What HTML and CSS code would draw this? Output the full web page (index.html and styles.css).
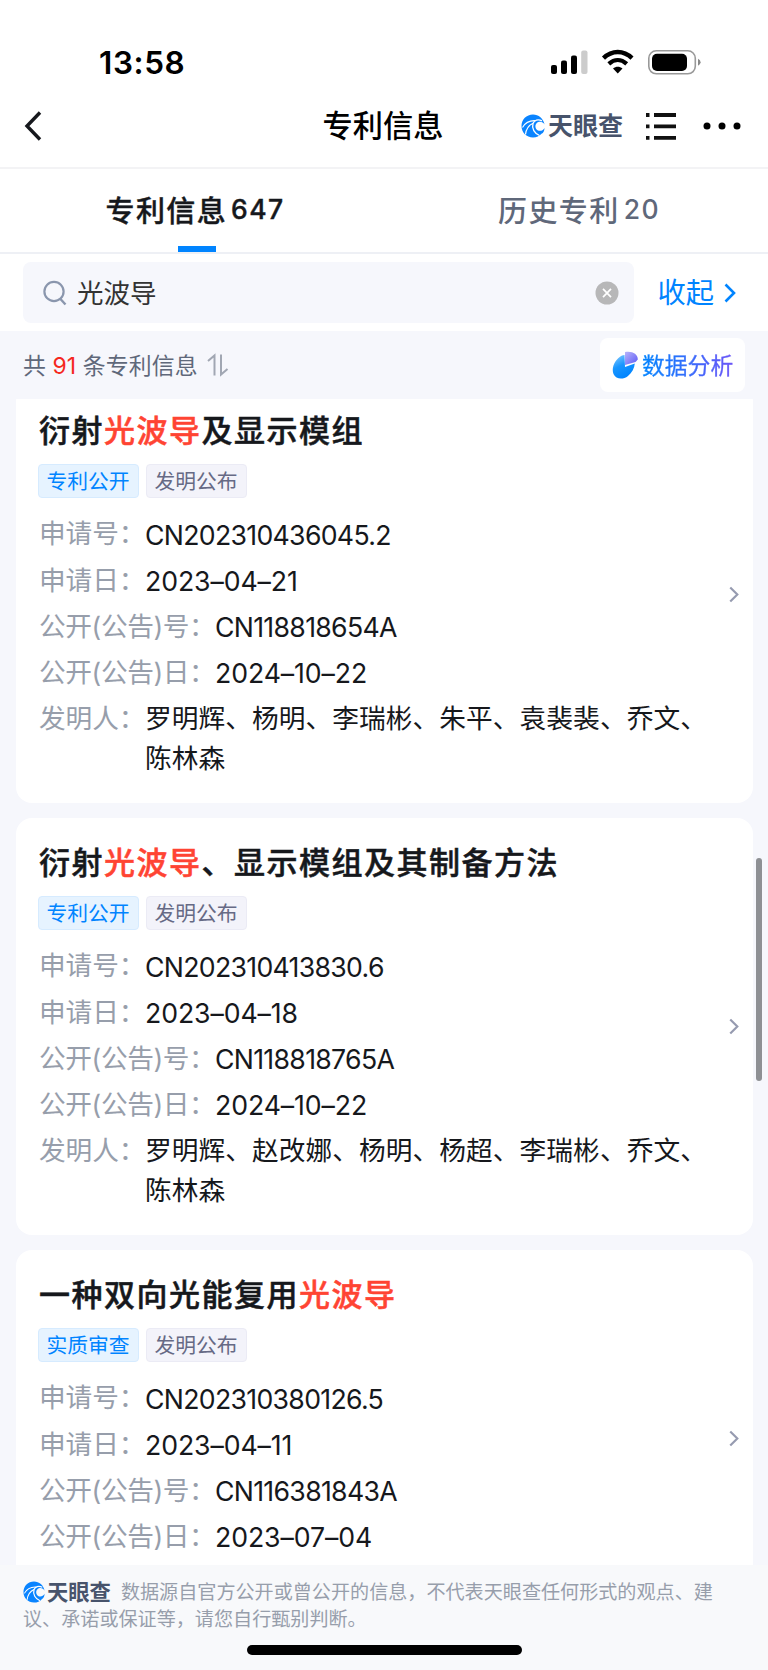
FILE: index.html
```html
<!DOCTYPE html>
<html lang="zh-CN">
<head>
    <meta charset="UTF-8">
    <meta name="viewport" content="width=device-width, initial-scale=1.0">
    <title>专利信息</title>
    <link rel="stylesheet" href="styles.css">
</head>
<body>
    <!-- Shared icons -->
    <svg class="sprite" aria-hidden="true">
        <symbol id="icon-brand" viewBox="0 0 24 24">
            <path d="M23.5 10.5 C22.5 4.5 17.500 0.500 12 0.500 C5.500 0.500 0.500 5.500 0.500 12 C0.500 18.500 5.500 23.500 12 23.500 C15.500 23.500 18.500 22 20.500 19.800 C22.500 19 23.500 16.500 23.500 14 C21.800 17.300 17.500 17.800 15.400 15.200 C13.500 12.500 14.500 9.300 17.300 8 C19.800 7.200 22.300 8.200 23.500 10.500 Z" fill="#0a84ff"/>
            <path d="M21 6.800 C17 4.800 13.200 6 12 9.500 C10.500 14.500 13.500 19.500 18.500 21.500" fill="none" stroke="#fff" stroke-width="1.300"/>
            <path d="M1.500 13.500 C4 9 8 6.300 14.500 6.700" fill="none" stroke="#fff" stroke-width="1.100"/>
            <path d="M4.500 20.500 C5 15.500 7.500 11.500 12 9.300" fill="none" stroke="#fff" stroke-width="1.200"/>
        </symbol>
        <symbol id="icon-arrow" viewBox="0 0 12 20">
            <path d="M1.5 1.5 L10 10 L1.5 18.5" fill="none" stroke="currentColor"/>
        </symbol>
    </svg>

    <!-- Status Bar -->
    <div class="status-bar">
        <span class="clock">13:58</span>
        <svg class="status-icons" width="152" height="28" viewBox="0 0 152 28">
            <rect x="1" y="17" width="6" height="9" rx="2"/>
            <rect x="11" y="12.5" width="6" height="13.5" rx="2"/>
            <rect x="21" y="7.5" width="6" height="18.5" rx="2"/>
            <rect x="31.2" y="2.5" width="6.3" height="23.5" rx="2" fill="#ccc"/>
            <path d="M53.5 10.2 C62 2 73.5 2 82 10.2" fill="none" stroke="#000" stroke-width="4.4"/>
            <path d="M58.8 15.9 C64.5 10.7 71 10.7 76.7 15.9" fill="none" stroke="#000" stroke-width="4.2"/>
            <path d="M63 20.6 C66 18 69.5 18 72.5 20.6 L67.75 25.6 Z"/>
            <rect x="98.8" y="2.8" width="46.5" height="23" rx="7.5" fill="none" stroke="#999" stroke-width="1.6"/>
            <rect x="102" y="5.7" width="35" height="17.3" rx="5"/>
            <path d="M148 10.8 Q150.6 12 150.6 14.3 Q150.6 16.6 148 17.8 Z" fill="#888"/>
        </svg>
    </div>

    <!-- Header -->
    <header class="navbar">
        <svg class="back-icon" width="18" height="30" viewBox="0 0 18 30">
            <path d="M16 1.5 L3 15 L16 28.5" fill="none" stroke="#16181d" stroke-width="3.4"/>
        </svg>
        <h1 class="nav-title">专利信息</h1>
        <div class="nav-actions">
            <span class="brand"><svg class="brand-icon"><use href="#icon-brand"/></svg>天眼查</span>
            <svg class="list-icon" width="32" height="28" viewBox="0 0 32 28">
                <path d="M1 3 H4.5 M9 3 H31 M1 14.3 H4.5 M9 14.3 H31 M1 25.8 H4.5 M9 25.8 H31" stroke="#111" stroke-width="3.8"/>
            </svg>
            <svg width="38" height="8" viewBox="0 0 38 8">
                <circle cx="4" cy="4" r="3.5"/>
                <circle cx="19" cy="4" r="3.5"/>
                <circle cx="34" cy="4" r="3.5"/>
            </svg>
        </div>
    </header>

    <!-- Tabs -->
    <nav class="tabs">
        <a class="tab active">专利信息<span class="tab-count">647</span></a>
        <a class="tab">历史专利<span class="tab-count">20</span></a>
    </nav>

    <!-- Search -->
    <div class="search-row">
        <div class="search-box">
            <svg width="24" height="26" viewBox="0 0 24 26">
                <circle cx="11" cy="11.5" r="9.6" fill="none" stroke="#8a96ad" stroke-width="2.2"/>
                <path d="M17 18.5 L22.5 24.5" stroke="#8a96ad" stroke-width="2.4"/>
            </svg>
            <span class="search-text">光波导</span>
            <svg class="clear-icon" width="24" height="24" viewBox="0 0 24 24">
                <circle cx="12" cy="12" r="11.5" fill="#b7b7b8"/>
                <path d="M8 7.8 L16 16.2 M16 7.8 L8 16.2" stroke="#fff" stroke-width="1.7"/>
            </svg>
        </div>
        <a class="collapse"><span>收起</span><svg class="collapse-arrow"><use href="#icon-arrow"/></svg></a>
    </div>

    <!-- Summary -->
    <div class="summary">
        <p class="total">共 <em>91</em> 条专利信息</p>
        <svg class="sort-icon" width="22" height="24" viewBox="0 0 22 24">
            <path d="M1 8 L7.5 2.5 V22.5 M14 1.5 V21.5 L20.5 16" fill="none" stroke="#a1a7b3" stroke-width="2"/>
        </svg>
        <button class="analysis-btn">
            <svg width="26" height="28" viewBox="0 0 26 28">
                <defs>
                    <linearGradient id="pie-blue" x1="0" y1="0" x2="0.5" y2="1">
                        <stop offset="0" stop-color="#8fd0ff"/>
                        <stop offset="0.5" stop-color="#1896ff"/>
                        <stop offset="1" stop-color="#0084ff"/>
                    </linearGradient>
                    <linearGradient id="pie-purple" x1="0" y1="0" x2="1" y2="1">
                        <stop offset="0" stop-color="#b9b5fb"/>
                        <stop offset="1" stop-color="#5b57f5"/>
                    </linearGradient>
                </defs>
                <path d="M10 4.5 C3 8 -1 17 1.5 23 C4 28.5 11 29 16 25 C20 21.5 22.5 17 22.8 12.5 L13 16 L12.5 4 Z" fill="url(#pie-blue)"/>
                <path d="M13 1 C20 -0.5 26 3 25.8 8.5 L23.5 11 L13 14 Z" fill="url(#pie-purple)"/>
            </svg>
            <span>数据分析</span>
        </button>
    </div>

    <!-- Patent List -->
    <main class="patent-list">
        <article class="card">
            <div class="card-body">
                <h2 class="card-title">衍射<em>光波导</em>及显示模组</h2>
                <div class="tags"><span class="tag tag-blue">专利公开</span><span class="tag">发明公布</span></div>
                <dl class="fields">
                    <div class="field"><dt>申请号：</dt><dd>CN202310436045.2</dd></div>
                    <div class="field"><dt>申请日：</dt><dd class="date">2023–04–21</dd></div>
                    <div class="field wide"><dt>公开(公告)号：</dt><dd>CN118818654A</dd></div>
                    <div class="field wide"><dt>公开(公告)日：</dt><dd class="date">2024–10–22</dd></div>
                    <div class="field people"><dt>发明人：</dt><dd>罗明辉、杨明、李瑞彬、朱平、袁裴裴、乔文、陈林森</dd></div>
                </dl>
            </div>
            <svg class="card-arrow"><use href="#icon-arrow"/></svg>
        </article>

        <article class="card">
            <div class="card-body">
                <h2 class="card-title">衍射<em>光波导</em>、显示模组及其制备方法</h2>
                <div class="tags"><span class="tag tag-blue">专利公开</span><span class="tag">发明公布</span></div>
                <dl class="fields">
                    <div class="field"><dt>申请号：</dt><dd>CN202310413830.6</dd></div>
                    <div class="field"><dt>申请日：</dt><dd class="date">2023–04–18</dd></div>
                    <div class="field wide"><dt>公开(公告)号：</dt><dd>CN118818765A</dd></div>
                    <div class="field wide"><dt>公开(公告)日：</dt><dd class="date">2024–10–22</dd></div>
                    <div class="field people"><dt>发明人：</dt><dd>罗明辉、赵改娜、杨明、杨超、李瑞彬、乔文、陈林森</dd></div>
                </dl>
            </div>
            <svg class="card-arrow"><use href="#icon-arrow"/></svg>
        </article>

        <article class="card card-short">
            <div class="card-body">
                <h2 class="card-title">一种双向光能复用<em>光波导</em></h2>
                <div class="tags"><span class="tag tag-blue">实质审查</span><span class="tag">发明公布</span></div>
                <dl class="fields">
                    <div class="field"><dt>申请号：</dt><dd>CN202310380126.5</dd></div>
                    <div class="field"><dt>申请日：</dt><dd class="date">2023–04–11</dd></div>
                    <div class="field wide"><dt>公开(公告)号：</dt><dd>CN116381843A</dd></div>
                    <div class="field wide"><dt>公开(公告)日：</dt><dd class="date">2023–07–04</dd></div>
                </dl>
            </div>
            <svg class="card-arrow"><use href="#icon-arrow"/></svg>
        </article>
    </main>
    <div class="scrollbar"></div>

    <!-- Footer -->
    <footer class="footer">
        <p class="disclaimer"><span class="brand brand-small"><svg class="brand-icon"><use href="#icon-brand"/></svg>天眼查</span>数据源自官方公开或曾公开的信息，不代表天眼查任何形式的观点、建议、承诺或保证等，请您自行甄别判断。</p>
        <div class="home-indicator"></div>
    </footer>
</body>
</html>
```

FILE: styles.css
```css
/* Global Styles */
:root {
    --primary-color: #0084ff;
    --highlight-color: #ff4433;
    --background-color: #f6f7fc;
    --text-color: #16181c;
    --label-color: #979eab;
    --muted-color: #5f687a;
}

* {
    box-sizing: border-box;
}

body {
    position: relative;
    width: 768px;
    height: 1670px;
    margin: 0;
    overflow: hidden;
    display: flex;
    flex-direction: column;
    background-color: #fff;
    color: var(--text-color);
    font-family: Inter, "Noto Sans CJK SC", sans-serif;
}

h1, h2, p, dl, dd {
    margin: 0;
}

em {
    font-style: normal;
}

svg {
    flex: none;
}

.sprite {
    position: absolute;
    width: 0;
    height: 0;
}

/* Status Bar */
.status-bar {
    height: 84px;
    padding: 42px 66px 0 99px;
    display: flex;
    justify-content: space-between;
    align-items: center;
}

.clock {
    margin-top: -2px;
    font-size: 31.5px;
    font-weight: 600;
    letter-spacing: 0.6px;
    color: #000;
}

.status-icons {
    margin-top: -2px;
}

/* Header */
.navbar {
    height: 85px;
    padding: 0 27px 0 24px;
    display: grid;
    grid-template-columns: 1fr auto 1fr;
    align-items: center;
    border-bottom: 2px solid #f3f3f5;
}

.nav-title {
    padding-left: 1px;
    font-size: 30.2px;
    font-weight: 500;
    line-height: 40px;
    color: #000;
}

.nav-actions {
    display: flex;
    justify-content: flex-end;
    align-items: center;
}

.brand {
    display: flex;
    align-items: center;
    gap: 3px;
    font-size: 25px;
    font-weight: 700;
    line-height: 28px;
    color: #47536b;
}

.brand-icon {
    width: 24px;
    height: 24px;
}

.list-icon {
    margin: 0 26px 0 22px;
}

/* Tabs */
.tabs {
    height: 85px;
    display: grid;
    grid-template-columns: 1fr 1fr;
    border-bottom: 2px solid #eef0f5;
}

.tab {
    position: relative;
    display: flex;
    justify-content: center;
    align-items: center;
    padding: 0 0 4px 6px;
    font-size: 29px;
    font-weight: 500;
    letter-spacing: 1.4px;
    color: var(--muted-color);
}

.tab.active {
    color: var(--text-color);
    -webkit-text-stroke: 0.4px;
}

.tab.active::after {
    content: "";
    position: absolute;
    left: 178px;
    bottom: 0;
    width: 38px;
    height: 6px;
    background-color: var(--primary-color);
}

.tab-count {
    margin-left: 4px;
    font-size: 26.5px;
}

/* Search */
.search-row {
    height: 77px;
    padding: 8px 32px 8px 23px;
    display: flex;
    justify-content: space-between;
    align-items: center;
}

.search-box {
    width: 611px;
    height: 61px;
    padding: 0 15px 0 20px;
    display: flex;
    align-items: center;
    border-radius: 8px;
    background-color: var(--background-color);
}

.search-text {
    margin-left: 10px;
    padding-bottom: 2px;
    font-size: 26.5px;
    color: #333;
}

.clear-icon {
    margin-left: auto;
}

.collapse {
    display: flex;
    align-items: center;
    gap: 10px;
    font-size: 28.3px;
    color: var(--primary-color);
}

.collapse span {
    padding-bottom: 4px;
}

.collapse-arrow {
    width: 12px;
    height: 20px;
    stroke-width: 2.6;
}

/* Summary */
.summary {
    height: 68px;
    padding: 0 23px;
    display: flex;
    align-items: center;
    background-color: var(--background-color);
}

.total {
    padding-bottom: 2px;
    font-size: 22.9px;
    letter-spacing: 0.1px;
    color: var(--muted-color);
}

.total em {
    color: #f5281e;
}

.sort-icon {
    margin-left: 9px;
}

.analysis-btn {
    width: 145px;
    height: 54px;
    margin-left: auto;
    padding: 0 0 0 12px;
    display: flex;
    align-items: center;
    gap: 4px;
    border: none;
    border-radius: 8px;
    background-color: #fff;
    font-family: inherit;
    font-size: 22.8px;
}

.analysis-btn span {
    padding-bottom: 2px;
    background: linear-gradient(90deg, #0084ff, #6b55f8);
    background-clip: text;
    -webkit-background-clip: text;
    color: transparent;
    -webkit-text-stroke: 0.3px transparent;
}

/* Patent List */
.patent-list {
    height: 1166px;
    padding: 0 15px 0 16px;
    overflow: hidden;
    background-color: var(--background-color);
}

.card {
    height: 417px;
    margin-bottom: 15px;
    padding: 24px 14px 0 23px;
    display: flex;
    border-radius: 16px;
    background-color: #fff;
}

/* First card is partly scrolled under the summary bar */
.card:first-child {
    margin-top: -13px;
}

.card-short {
    height: 376px;
}

.card-body {
    flex: 1;
}

.card-title {
    font-size: 31px;
    font-weight: 500;
    line-height: 42px;
    letter-spacing: 1.5px;
    -webkit-text-stroke: 0.5px;
}

.card-title em {
    color: var(--highlight-color);
}

.tags {
    margin: 12px 0 0 -1px;
    display: flex;
    gap: 7px;
}

.tag {
    width: 101px;
    height: 34px;
    padding-right: 1px;
    border: 1px solid #ebebf5;
    border-radius: 4px;
    background-color: #f3f3fa;
    font-size: 20.8px;
    line-height: 33px;
    text-align: center;
    color: #666a85;
}

.tag-blue {
    border-color: #d6ebff;
    background-color: #e6f3ff;
    color: var(--primary-color);
}

.fields {
    margin-top: 13px;
}

.field {
    display: flex;
    height: 46px;
    font-size: 26.7px;
    line-height: 46px;
}

.field dt {
    width: 106px;
    color: var(--label-color);
    white-space: nowrap;
    letter-spacing: -0.1px;
}

.field.wide dt {
    width: 176px;
    letter-spacing: -0.4px;
}

.field:first-child dt {
    line-height: 44px;
}

.field dd {
    padding-top: 1px;
    letter-spacing: -0.7px;
}

.field .date {
    letter-spacing: -0.1px;
}

.field.people dd {
    width: 570px;
    padding-top: 3px;
    line-height: 40px;
    letter-spacing: 0.07px;
}

.card-arrow {
    width: 10px;
    height: 17px;
    margin-top: 176px;
    color: #969bb0;
    stroke-width: 2.6;
}

.card-short .card-arrow {
    margin-top: 156px;
}

.scrollbar {
    position: absolute;
    right: 6px;
    top: 858px;
    width: 6px;
    height: 223px;
    border-radius: 3px;
    background-color: #8e9094;
}

/* Footer */
.footer {
    flex: 1;
    padding: 14px 23px 0;
    background-color: #f8f9fb;
}

.disclaimer {
    font-size: 19.1px;
    line-height: 27px;
    color: var(--label-color);
}

.brand-small {
    display: inline-flex;
    gap: 2px;
    height: 26px;
    margin-right: 10px;
    font-size: 21.3px;
    line-height: 22px;
    vertical-align: top;
}

.brand-small .brand-icon {
    width: 22px;
    height: 22px;
}

.home-indicator {
    width: 275px;
    height: 10px;
    margin: 12px auto 0;
    border-radius: 5px;
    background-color: #000;
}
```
